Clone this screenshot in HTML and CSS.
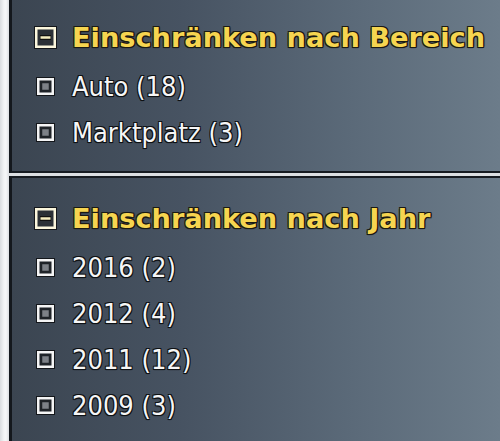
FILE: index.html
```html
<!DOCTYPE html>
<html lang="de">
<head>
<meta charset="utf-8">
<link rel="stylesheet" href="styles.css">
</head>
<body>
<div class="sidebar">
  <section class="panel panel-top">
    <h2 class="heading">
      <svg class="icon-head" width="23" height="23" viewBox="0 0 23 23"><rect x="0" y="0" width="23" height="23" fill="#14171b"/><rect x="2.25" y="2.25" width="18.5" height="18.5" fill="#2b3036" stroke="#fbf6dc" stroke-width="2.5"/><rect x="6" y="9" width="11" height="5" fill="#111"/><rect x="6.5" y="10.25" width="10" height="2.5" fill="#f6eec0"/></svg>
      <span>Einschränken nach Bereich</span>
    </h2>
    <ul class="list">
      <li><svg class="icon-item" width="19" height="19" viewBox="0 0 19 19"><rect width="19" height="19" fill="#14171b"/><rect x="2.25" y="2.25" width="14.5" height="14.5" fill="#1f2328" stroke="#f4f4f4" stroke-width="2.5"/><rect x="6.25" y="6.25" width="6.5" height="6.5" fill="#7d8187"/></svg><span>Auto (18)</span></li>
      <li><svg class="icon-item" width="19" height="19" viewBox="0 0 19 19"><rect width="19" height="19" fill="#14171b"/><rect x="2.25" y="2.25" width="14.5" height="14.5" fill="#1f2328" stroke="#f4f4f4" stroke-width="2.5"/><rect x="6.25" y="6.25" width="6.5" height="6.5" fill="#7d8187"/></svg><span>Marktplatz (3)</span></li>
    </ul>
  </section>
  <section class="panel panel-bottom">
    <h2 class="heading">
      <svg class="icon-head" width="23" height="23" viewBox="0 0 23 23"><rect x="0" y="0" width="23" height="23" fill="#14171b"/><rect x="2.25" y="2.25" width="18.5" height="18.5" fill="#2b3036" stroke="#fbf6dc" stroke-width="2.5"/><rect x="6" y="9" width="11" height="5" fill="#111"/><rect x="6.5" y="10.25" width="10" height="2.5" fill="#f6eec0"/></svg>
      <span>Einschränken nach Jahr</span>
    </h2>
    <ul class="list">
      <li><svg class="icon-item" width="19" height="19" viewBox="0 0 19 19"><rect width="19" height="19" fill="#14171b"/><rect x="2.25" y="2.25" width="14.5" height="14.5" fill="#1f2328" stroke="#f4f4f4" stroke-width="2.5"/><rect x="6.25" y="6.25" width="6.5" height="6.5" fill="#7d8187"/></svg><span>2016 (2)</span></li>
      <li><svg class="icon-item" width="19" height="19" viewBox="0 0 19 19"><rect width="19" height="19" fill="#14171b"/><rect x="2.25" y="2.25" width="14.5" height="14.5" fill="#1f2328" stroke="#f4f4f4" stroke-width="2.5"/><rect x="6.25" y="6.25" width="6.5" height="6.5" fill="#7d8187"/></svg><span>2012 (4)</span></li>
      <li><svg class="icon-item" width="19" height="19" viewBox="0 0 19 19"><rect width="19" height="19" fill="#14171b"/><rect x="2.25" y="2.25" width="14.5" height="14.5" fill="#1f2328" stroke="#f4f4f4" stroke-width="2.5"/><rect x="6.25" y="6.25" width="6.5" height="6.5" fill="#7d8187"/></svg><span>2011 (12)</span></li>
      <li><svg class="icon-item" width="19" height="19" viewBox="0 0 19 19"><rect width="19" height="19" fill="#14171b"/><rect x="2.25" y="2.25" width="14.5" height="14.5" fill="#1f2328" stroke="#f4f4f4" stroke-width="2.5"/><rect x="6.25" y="6.25" width="6.5" height="6.5" fill="#7d8187"/></svg><span>2009 (3)</span></li>
    </ul>
  </section>
</div>
</body>
</html>
```
FILE: styles.css
```css
html, body {
  margin: 0;
  padding: 0;
}
body {
  width: 500px;
  height: 441px;
  overflow: hidden;
  background: linear-gradient(to right, #d9dcdf 0, #f2f4f5 4px, #f6f7f8 6px, #dcdfe2 9px);
  font-family: "DejaVu Sans", Verdana, sans-serif;
}
.sidebar {
  margin-left: 9px;
  display: flex;
  flex-direction: column;
  height: 441px;
}
.panel {
  border-left: 3px solid #14181d;
  background: linear-gradient(to right, #3b4551 0, #475362 35%, #5b6a79 70%, #6c7c8a 100%);
  box-sizing: border-box;
}
.panel-top {
  height: 173px;
  padding: 14px 0 0 0;
  border-bottom: 2px solid #161b21;
}
.panel-bottom {
  margin-top: 3px;
  flex: 1;
  padding: 17px 0 0 0;
  border-top: 2px solid #161b21;
}
.heading {
  margin: 0 0 3px 0;
  display: flex;
  align-items: center;
  height: 46px;
  padding-left: 22px;
  font-size: 27.2px;
  font-weight: bold;
  color: #f6d550;
  white-space: nowrap;
  text-shadow: 1px 1px 0 #1a1a14, -1px -1px 0 #1a1a14, 1px -1px 0 #1a1a14, -1px 1px 0 #1a1a14, 0 1px 1px #000, 1px 0 1px #000;
}
.icon-head {
  flex: none;
  margin-right: 15px;
}
.list {
  list-style: none;
  margin: 0;
  padding: 0;
}
.list li {
  display: flex;
  align-items: center;
  height: 46px;
  padding-left: 24px;
  font-family: "DejaVu Sans Condensed", "DejaVu Sans", sans-serif;
  font-stretch: condensed;
  font-size: 27px;
  color: #f6f6f6;
  white-space: nowrap;
  text-shadow: 1px 1px 0 #0e1114, -1px -1px 0 #0e1114, 1px -1px 0 #0e1114, -1px 1px 0 #0e1114, 0 1px 1px #000;
}
.icon-item {
  flex: none;
  margin-right: 17px;
}
```
